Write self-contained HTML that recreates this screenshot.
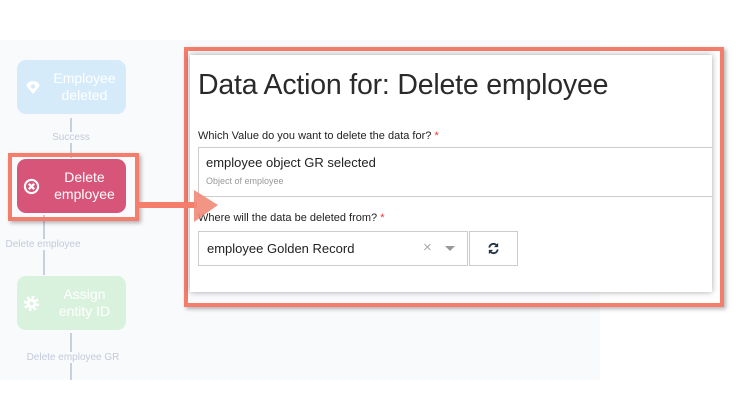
<!DOCTYPE html>
<html><head><style>
*{margin:0;padding:0;box-sizing:border-box}
body{width:752px;height:409px;background:#fff;position:relative;overflow:hidden;font-family:"Liberation Sans",Arial,sans-serif}
.bg{position:absolute;left:0;top:40px;width:600px;height:340px;background:#f9fafc}
.node{position:absolute;left:17px;width:109px;height:54px;border-radius:9px;color:#fff;font-size:14px;line-height:17px;text-align:center;padding-left:26px;display:flex;align-items:center;justify-content:center}
.lbl{position:absolute;font-size:10px;color:#c3cad8;text-align:center}
.vl{position:absolute;width:2px;background:#c8cfe0}
.panel{position:absolute;left:190px;top:55px;width:522px;height:237px;background:#fff;box-shadow:0 0 6px rgba(0,0,0,.35)}
.obox{position:absolute;left:184px;top:47px;width:540px;height:260px;border:4px solid #f47d6b;box-shadow:2px 2px 4px rgba(0,0,0,.3)}
.red{color:#e33}
</style></head><body>
<div class="bg"></div>
<div class="vl" style="left:70px;top:118px;height:40px"></div>
<div class="vl" style="left:43px;top:215px;height:60px"></div>
<div class="vl" style="left:70px;top:333px;height:47px"></div>
<div class="lbl" style="left:40px;top:132px;width:62px;background:#f9fafc">Success</div>
<div class="lbl" style="left:0;top:239px;width:86px;background:#f9fafc">Delete employee</div>
<div class="lbl" style="left:18px;top:352px;width:110px;background:#f9fafc">Delete employee GR</div>
<div class="node" style="top:60px;background:#d6ebfa">Employee<br>deleted</div>
<svg style="position:absolute;left:25px;top:80px" width="16" height="16" viewBox="0 0 16 16"><path d="M1.5 6 A6.5 5 0 0 1 14.5 6 L8 14 Z" fill="#fff"/><circle cx="8" cy="6.5" r="2.2" fill="#d6ebfa"/></svg>
<div class="node" style="top:276px;background:#d9f2dd">Assign<br>entity ID</div>
<svg style="position:absolute;left:23px;top:295px" width="17" height="17" viewBox="0 0 16 16"><circle cx="8" cy="8" r="5.5" fill="none" stroke="#fff" stroke-width="3.5" stroke-dasharray="2.4 1.9"/><circle cx="8" cy="8" r="4.5" fill="#fff"/><circle cx="8" cy="8" r="1.8" fill="#d9f2dd"/></svg>
<div style="position:absolute;left:8px;top:153px;width:131px;height:68px;border:4px solid #f47d6b;box-shadow:2px 2px 4px rgba(0,0,0,.3)"></div>
<div class="node" style="top:159px;background:#d8557a">Delete<br>employee</div>
<svg style="position:absolute;left:23px;top:178px" width="17" height="17" viewBox="0 0 16 16"><circle cx="8" cy="8" r="6.2" fill="none" stroke="#fff" stroke-width="2"/><path d="M5.5 5.5 L10.5 10.5 M10.5 5.5 L5.5 10.5" stroke="#fff" stroke-width="2.2"/></svg>
<div class="obox"></div>
<div class="panel">
<div style="position:absolute;left:8px;top:14px;font-size:28.5px;color:#2a2a2a;letter-spacing:-0.2px">Data Action for: Delete employee</div>
<div style="position:absolute;left:8px;top:75px;font-size:11px;color:#222">Which Value do you want to delete the data for? <span class="red">*</span></div>
<div style="position:absolute;left:8px;top:92px;width:514px;height:50px;border:1px solid #ccc;border-right:none">
<div style="position:absolute;left:7px;top:7px;font-size:13px;color:#222">employee object GR selected</div>
<div style="position:absolute;left:7px;top:28px;font-size:9px;color:#999">Object of employee</div></div>
<div style="position:absolute;left:8px;top:157px;font-size:11px;color:#222">Where will the data be deleted from? <span class="red">*</span></div>
<div style="position:absolute;left:8px;top:176px;width:270px;height:35px;border:1px solid #ccc">
<div style="position:absolute;left:8px;top:9px;font-size:13px;color:#222">employee Golden Record</div>
<div style="position:absolute;left:224px;top:7px;font-size:15px;color:#aaa">×</div>
<div style="position:absolute;left:246px;top:14px;width:0;height:0;border-left:5px solid transparent;border-right:5px solid transparent;border-top:5px solid #999"></div></div>
<div style="position:absolute;left:279px;top:176px;width:49px;height:35px;border:1px solid #ccc">
<svg style="position:absolute;left:17px;top:10px" width="13" height="13" viewBox="0 0 14 14"><path d="M2.5 6 A4.5 4.5 0 0 1 11 4.5 M11.5 8 A4.5 4.5 0 0 1 3 9.5" fill="none" stroke="#234" stroke-width="2"/><path d="M12 1 V5.5 H7.5 Z M2 13 V8.5 H6.5 Z" fill="#234"/></svg></div>
</div>
<div style="position:absolute;left:139px;top:202px;width:58px;height:6px;background:#f47d6b;z-index:5"></div>
<svg style="position:absolute;left:194px;top:188px;z-index:5" width="26" height="36" viewBox="0 0 26 36"><path d="M0 2 L24 17 L0 34 Z" fill="#f28a78" fill-opacity="0.9"/></svg>
</body></html>
